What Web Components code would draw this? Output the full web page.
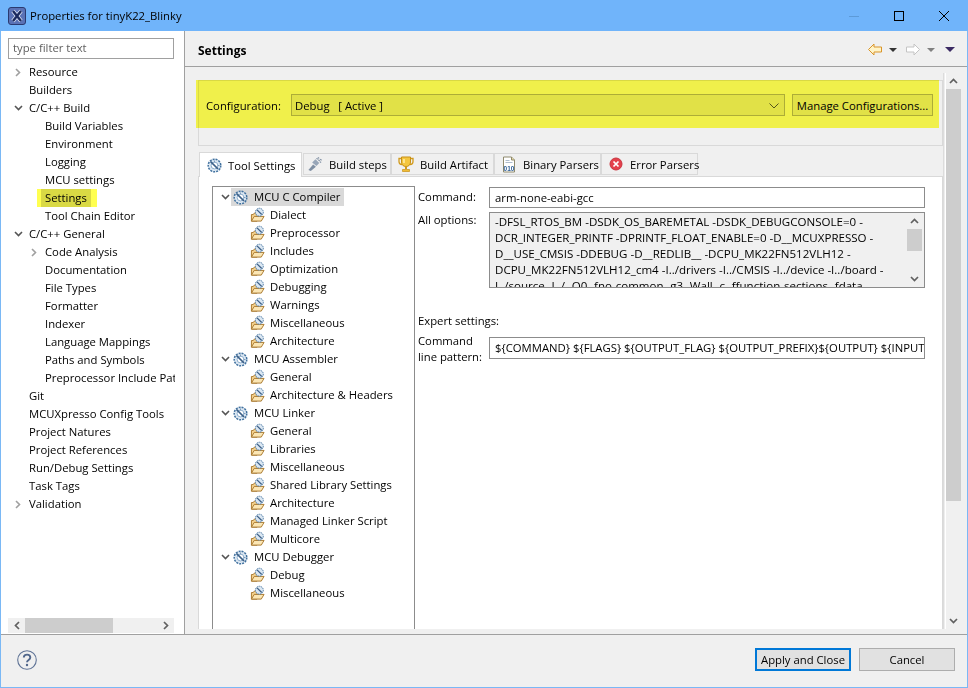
<!DOCTYPE html>
<html>
<head>
<meta charset="utf-8">
<title>Properties for tinyK22_Blinky</title>
<style>
    html, body { margin: 0; padding: 0; }
    body { width: 968px; height: 688px; overflow: hidden; font: 11.3px "Open Sans", "Noto Sans", sans-serif; color: #000; }
</style>
</head>
<body>
<prop-window heading="Properties for tinyK22_Blinky">
    <nav-pane slot="nav">
        <tree-row depth="0" twisty="closed">Resource</tree-row>
        <tree-row depth="0">Builders</tree-row>
        <tree-row depth="0" twisty="open">C/C++ Build</tree-row>
        <tree-row depth="1">Build Variables</tree-row>
        <tree-row depth="1">Environment</tree-row>
        <tree-row depth="1">Logging</tree-row>
        <tree-row depth="1">MCU settings</tree-row>
        <tree-row depth="1" selected marked>Settings</tree-row>
        <tree-row depth="1">Tool Chain Editor</tree-row>
        <tree-row depth="0" twisty="open">C/C++ General</tree-row>
        <tree-row depth="1" twisty="closed">Code Analysis</tree-row>
        <tree-row depth="1">Documentation</tree-row>
        <tree-row depth="1">File Types</tree-row>
        <tree-row depth="1">Formatter</tree-row>
        <tree-row depth="1">Indexer</tree-row>
        <tree-row depth="1">Language Mappings</tree-row>
        <tree-row depth="1">Paths and Symbols</tree-row>
        <tree-row depth="1">Preprocessor Include Paths, Macros etc.</tree-row>
        <tree-row depth="0">Git</tree-row>
        <tree-row depth="0">MCUXpresso Config Tools</tree-row>
        <tree-row depth="0">Project Natures</tree-row>
        <tree-row depth="0">Project References</tree-row>
        <tree-row depth="0">Run/Debug Settings</tree-row>
        <tree-row depth="0">Task Tags</tree-row>
        <tree-row depth="0" twisty="closed">Validation</tree-row>
    </nav-pane>
    <settings-page slot="page" heading="Settings">
        <config-group slot="config"></config-group>
        <tab-folder slot="tabs">
            <folder-tab slot="tabs" icon="tool" active style="width:103px">Tool Settings</folder-tab>
            <folder-tab slot="tabs" icon="steps" style="width:88px;margin-left:1px;padding-left:3px">Build steps</folder-tab>
            <folder-tab slot="tabs" icon="trophy" style="width:103px">Build Artifact</folder-tab>
            <folder-tab slot="tabs" icon="binary" style="width:107px">Binary Parsers</folder-tab>
            <folder-tab slot="tabs" icon="error" style="width:97px">Error Parsers</folder-tab>
            <tool-tree>
                <tree-row inner depth="0" twisty="open" icon="tool" selected>MCU C Compiler</tree-row>
                <tree-row inner depth="1" icon="folder">Dialect</tree-row>
                <tree-row inner depth="1" icon="folder">Preprocessor</tree-row>
                <tree-row inner depth="1" icon="folder">Includes</tree-row>
                <tree-row inner depth="1" icon="folder">Optimization</tree-row>
                <tree-row inner depth="1" icon="folder">Debugging</tree-row>
                <tree-row inner depth="1" icon="folder">Warnings</tree-row>
                <tree-row inner depth="1" icon="folder">Miscellaneous</tree-row>
                <tree-row inner depth="1" icon="folder">Architecture</tree-row>
                <tree-row inner depth="0" twisty="open" icon="tool">MCU Assembler</tree-row>
                <tree-row inner depth="1" icon="folder">General</tree-row>
                <tree-row inner depth="1" icon="folder">Architecture &amp; Headers</tree-row>
                <tree-row inner depth="0" twisty="open" icon="tool">MCU Linker</tree-row>
                <tree-row inner depth="1" icon="folder">General</tree-row>
                <tree-row inner depth="1" icon="folder">Libraries</tree-row>
                <tree-row inner depth="1" icon="folder">Miscellaneous</tree-row>
                <tree-row inner depth="1" icon="folder">Shared Library Settings</tree-row>
                <tree-row inner depth="1" icon="folder">Architecture</tree-row>
                <tree-row inner depth="1" icon="folder">Managed Linker Script</tree-row>
                <tree-row inner depth="1" icon="folder">Multicore</tree-row>
                <tree-row inner depth="0" twisty="open" icon="tool">MCU Debugger</tree-row>
                <tree-row inner depth="1" icon="folder">Debug</tree-row>
                <tree-row inner depth="1" icon="folder">Miscellaneous</tree-row>
            </tool-tree>
            <tool-form></tool-form>
        </tab-folder>
    </settings-page>
</prop-window>

<script>
const ICONS = {
    logo: `<svg width="18" height="18" viewBox="0 0 18 18"><rect x=".5" y=".5" width="17" height="17" rx="2.5" fill="#5a72b6" stroke="#2a3a70"/><path d="M5 4l8 10M13 4L5 14" stroke="#dfe6f6" stroke-width="4"/><path d="M5 4l8 10M13 4L5 14" stroke="#1b2a5e" stroke-width="2.500"/></svg>`,
    tool: `<svg width="15" height="15" viewBox="0 0 15 15"><circle cx="7.500" cy="7.500" r="6.300" fill="#dbe7f2"/><circle cx="7.500" cy="7.500" r="6.300" fill="none" stroke="#41719f" stroke-width="1.500" stroke-dasharray="2 1"/><circle cx="7.500" cy="7.500" r="3.400" fill="#fff" stroke="#8fb0cf"/><path d="M3.500 3.500l7.500 7.500" stroke="#3a5e85" stroke-width="1.700"/><path d="M7.500 2.500v2M12.500 7.500h-2" stroke="#7e9cba"/></svg>`,
    folder: `<svg width="16" height="16" viewBox="0 0 16 16"><path d="M1.500 14.500V7.500h2l1-1.500h3v8.500z" fill="#f4d28e" stroke="#a8752a"/><path d="M1.500 14.500l3-5h10.500l-3 5z" fill="#fbe6b4" stroke="#a8752a"/><circle cx="10" cy="5" r="4.200" fill="#dbe7f2"/><circle cx="10" cy="5" r="4.200" fill="none" stroke="#41719f" stroke-dasharray="1.500 .8"/><path d="M7.500 2.500l5 5" stroke="#3a5e85" stroke-width="1.300"/></svg>`,
    steps: `<svg width="17" height="16" viewBox="0 0 17 16"><path d="M1.500 14.500l5-6 3 2.500-5.500 4.500z" fill="#7f8fa3"/><path d="M5.500 6.500L9 3l4 4-3 3z" fill="#98a6b8"/><path d="M10 2l1.500 1M12 3.500l1.500 1M13.500 5.500l1.500 1M11.500 1l1.500 1M14 3l1.500 1" stroke="#7f8fa3" stroke-width="1.200"/></svg>`,
    trophy: `<svg width="16" height="17" viewBox="0 0 16 17"><path d="M3 2.500H1v3c0 2 1.500 3 3 3M13 2.500h2v3c0 2-1.500 3-3 3" fill="none" stroke="#d19a1c" stroke-width="1.300"/><path d="M3.500 1h9v5c0 3-2 4.500-4.500 4.500S3.500 9 3.500 6z" fill="#f4c63f" stroke="#c78f16"/><path d="M6 3v4" stroke="#fff1b5" stroke-width="1.400"/><path d="M7 10.500h2v2.500H7z" fill="#d19a1c"/><path d="M4.500 13.500h7v2h-7z" fill="#f0bd37" stroke="#c78f16" stroke-width=".7"/></svg>`,
    binary: `<svg width="14" height="17" viewBox="0 0 14 17"><path d="M1.500 1h8l3 3v12h-11z" fill="#fff" stroke="#8f8a6e"/><path d="M9.500 1v3h3" fill="#e8d9a4" stroke="#8f8a6e"/><path d="M3.500 4.500h4M3.500 6.500h7" stroke="#aebccc"/><text x="7" y="14.500" text-anchor="middle" font-family="Liberation Sans" font-size="6.500" font-weight="700" fill="#2f5f96">010</text></svg>`,
    error: `<svg width="14" height="14" viewBox="0 0 14 14"><circle cx="7" cy="7" r="6" fill="#e4404c" stroke="#c9353f"/><path d="M4.500 4.500l5 5M9.500 4.500l-5 5" stroke="#fff" stroke-width="1.700"/></svg>`,
    back: `<svg width="16" height="13" viewBox="0 0 16 13"><path d="M1.500 6.500L7 1v3h7.500v5H7v3z" fill="#fff4c8" stroke="#d9952b" stroke-linejoin="round"/></svg>`,
    forward: `<svg width="16" height="13" viewBox="0 0 16 13"><path d="M14.500 6.500L9 1v3H1.500v5H9v3z" fill="#fff" stroke="#c4c4c4" stroke-linejoin="round"/></svg>`,
    chevOpen: `<svg width="9" height="6" viewBox="0 0 9 6"><path d="M1 1l3.500 3.500L8 1" fill="none" stroke="#555" stroke-width="1.600"/></svg>`,
    chevClosed: `<svg width="6" height="9" viewBox="0 0 6 9"><path d="M1 1l3.500 3.500L1 8" fill="none" stroke="#a0a0a0" stroke-width="1.600"/></svg>`,
    chevUp: `<svg width="9" height="6" viewBox="0 0 9 6"><path d="M1 5l3.500-3.500L8 5" fill="none" stroke="#606060" stroke-width="1.700"/></svg>`,
    chevLeft: `<svg width="6" height="9" viewBox="0 0 6 9"><path d="M5 1L1.500 4.500 5 8" fill="none" stroke="#606060" stroke-width="1.700"/></svg>`,
    chevRight: `<svg width="6" height="9" viewBox="0 0 6 9"><path d="M1 1l3.500 3.500L1 8" fill="none" stroke="#606060" stroke-width="1.700"/></svg>`,
    chevDown: `<svg width="9" height="6" viewBox="0 0 9 6"><path d="M1 1l3.500 3.500L8 1" fill="none" stroke="#606060" stroke-width="1.700"/></svg>`,
    comboArrow: `<svg width="10" height="6" viewBox="0 0 10 6"><path d="M.5.500L5 5 9.500.500" fill="none" stroke="#555" stroke-width="1"/></svg>`,
    minimize: `<svg width="10" height="10" viewBox="0 0 10 10"><path d="M0 5.500h10" stroke="#5c9ad8"/></svg>`,
    maximize: `<svg width="10" height="10" viewBox="0 0 10 10"><rect x=".5" y=".5" width="9" height="9" fill="none" stroke="#000"/></svg>`,
    close: `<svg width="10" height="10" viewBox="0 0 10 10"><path d="M0 0l10 10M10 0L0 10" stroke="#000"/></svg>`,
    help: `<svg width="20" height="20" viewBox="0 0 20 20"><circle cx="10" cy="10" r="9.300" fill="none" stroke="#5f7396" stroke-width="1.100"/><path d="M6.800 7.600c0-4 6.500-4 6.500 0 0 2.500-3.300 2.300-3.300 4.600" fill="none" stroke="#51678c" stroke-width="1.900"/><circle cx="10" cy="15" r="1.200" fill="#51678c"/></svg>`,
};

function defineShadow(name, html, extra = {}) {
    const template = document.createElement('template');
    template.innerHTML = html;
    const cls = class extends HTMLElement {
        constructor() {
            super();
            this.attachShadow({ mode: 'open' });
            this.shadowRoot.appendChild(template.content.cloneNode(true));
        }
        connectedCallback() {
            this.shadowRoot.querySelectorAll('[data-icon]').forEach(el => {
                el.innerHTML = ICONS[el.dataset.icon] || '';
            });
            if (extra.connected) extra.connected.call(this);
        }
    };
    customElements.define(name, cls);
}

defineShadow('win-titlebar', `
<style>
    :host { display: flex; align-items: center; height: 31px; background: #70b4fa; flex: none; padding-right: 2px; }
    .logo { margin-left: 8px; width: 18px; height: 18px; display: flex; }
    .text { margin-left: 4px; flex: 1; color: #000; }
    .btn { width: 45px; display: flex; justify-content: center; align-items: center; }
</style>
<span class="logo" data-icon="logo"></span>
<span class="text"><slot></slot></span>
<span class="btn" data-icon="minimize"></span>
<span class="btn" data-icon="maximize"></span>
<span class="btn" data-icon="close"></span>
`);

defineShadow('prop-window', `
<style>
    :host { display: flex; flex-direction: column; width: 968px; height: 688px; box-sizing: border-box; background: #fff;
        border: solid #7ab8f5; border-width: 0 1px 1px 1px; }
    win-titlebar { margin: 0 -1px; }
    .main { display: flex; height: 603px; flex: none; }
    .sash { width: 1px; background: #a0a0a0; flex: none; }
    footer { flex: 1; display: flex; align-items: center; background: #f0f0f0; border-top: 1px solid #a0a0a0; padding: 0 12px 3px 16px; }
    .help { display: flex; flex: 1; }
    .b { box-sizing: border-box; width: 96px; height: 23px; margin-left: 8px; background: #e1e1e1; border: 1px solid #adadad;
        display: flex; align-items: center; justify-content: center; }
    .b.def { border: 2px solid #0078d7; }
</style>
<win-titlebar id="bar"></win-titlebar>
<div class="main">
    <slot name="nav"></slot>
    <div class="sash"></div>
    <slot name="page"></slot>
</div>
<footer>
    <span class="help" data-icon="help"></span>
    <span class="b def">Apply and Close</span>
    <span class="b">Cancel</span>
</footer>
`, { connected() { this.shadowRoot.getElementById('bar').textContent = this.getAttribute('heading'); } });

defineShadow('scroll-bar', `
<style>
    :host { display: flex; flex-direction: column; align-items: stretch; width: 15px; background: #f0f0f0; flex: none; }
    .arrow { height: 16px; display: flex; align-items: center; justify-content: center; flex: none; }
    .track { flex: 1; }
    .thumb { background: #cdcdcd; height: var(--thumb, 50%); }
</style>
<span class="arrow" data-icon="chevUp"></span>
<div class="track"><div class="thumb"></div></div>
<span class="arrow" data-icon="chevDown"></span>
`);

defineShadow('nav-pane', `
<style>
    :host { display: flex; flex-direction: column; width: 183px; flex: none; background: #fff; padding-top: 7px; box-sizing: border-box; height: 603px; }
    .filter { box-sizing: border-box; margin-left: 7px; width: 166px; height: 21px; border: 1px solid #a0a0a0; padding-left: 4px;
        line-height: 18px; color: #5f5f5f; flex: none; }
    .rows { margin-top: 4px; padding-left: 9px; height: 450px; flex: none; width: 174px; box-sizing: border-box; overflow: hidden; }
    .spacer { flex: 1; }
    .hbar { margin-left: 7px; width: 166px; height: 15px; background: #f0f0f0; display: flex; align-items: center; flex: none; margin-bottom: 1px; }
    .hbar span { width: 17px; display: flex; justify-content: center; flex: none; }
    .hbar i { display: block; width: 88px; height: 15px; background: #cdcdcd; flex: none; }
    .hbar b { flex: 1; }
</style>
<div class="filter">type filter text</div>
<div class="rows"><slot></slot></div>
<div class="spacer"></div>
<div class="hbar"><span data-icon="chevLeft"></span><i></i><b></b><span data-icon="chevRight"></span></div>
`);

defineShadow('tree-row', `
<style>
    :host { display: flex; height: 18px; line-height: 18px; white-space: nowrap; position: relative; align-items: center; }
    .indent { flex: none; width: var(--indent, 0); }
    :host([depth="1"]) { --indent: 16px; }
    :host([inner][depth="1"]) { --indent: 17px; }
    .twisty { flex: none; width: 16px; display: flex; align-items: center; justify-content: center; }
    .sel { display: flex; align-items: center; height: 18px; padding: 0 3px; margin-left: 0; }
    :host([inner]) .sel { margin-left: -2px; padding: 0 4px 0 2px; }
    :host([selected]) .sel { background: #d9d9d9; }
    .ico { display: none; flex: none; width: 15px; height: 16px; align-items: center; justify-content: center; margin-right: 5px; }
    :host([icon]) .ico { display: flex; }
    :host([depth="0"]) .ico { margin-right: 6px; }
    :host([marked])::after { content: ""; position: absolute; left: 27px; top: 0; width: 60px; height: 18px; background: #ffff50;
        mix-blend-mode: multiply; pointer-events: none; }
    :host([marked]) .sel { padding: 0 4px; margin-left: -1px; position: relative; }
</style>
<span class="indent"></span>
<span class="twisty" id="tw"></span>
<span class="sel"><span class="ico" id="ic"></span><span><slot></slot></span></span>
`, { connected() {
    const t = this.getAttribute('twisty');
    if (t) this.shadowRoot.getElementById('tw').innerHTML = t === 'open' ? ICONS.chevOpen : ICONS.chevClosed;
    const i = this.getAttribute('icon');
    if (i) this.shadowRoot.getElementById('ic').innerHTML = ICONS[i];
} });

defineShadow('settings-page', `
<style>
    :host { display: flex; flex-direction: column; flex: 1; min-width: 0; background: #f0f0f0; }
    header { height: 35px; flex: none; box-sizing: border-box; display: flex; align-items: center; padding: 3px 12px 0 13px; }
    .rule { height: 1px; background: #a0a0a0; flex: none; }
    h1 { margin: 0; font: inherit; font-size: 12px; font-weight: 700; flex: 1; }
    .tool { display: flex; align-items: center; margin-top: -2px; }
    .tri { width: 0; height: 0; border: solid transparent; border-width: 4px 4px 0; border-top-color: #333; margin: 1px 8px 0 6px; }
    .tri.off { border-top-color: #808080; margin-right: 10px; }
    .tri.menu { border-width: 5px 5px 0; border-top-color: #3b2a63; margin: 1px 0 0 0; }
    .body { flex: 1; display: flex; min-height: 0; }
    .content { width: 758px; flex: none; padding: 13px 0 0 13px; box-sizing: border-box; }
    .content ::slotted(config-group) { margin-bottom: 6px; }
    .edge { width: 3px; flex: none; margin: 6px 0 5px; background: linear-gradient(to right, #dcdcdc 0 1px, #eee 1px 2px, #fff 2px 3px); }
    scroll-bar { margin-top: 6px; margin-bottom: 5px; --thumb: 412px; }
</style>
<header>
    <h1 id="h"></h1>
    <div class="tool">
        <span data-icon="back" style="display:flex"></span><i class="tri"></i>
        <span data-icon="forward" style="display:flex"></span><i class="tri off"></i><i class="tri menu"></i>
    </div>
</header>
<div class="rule"></div>
<div class="body">
    <div class="content">
        <slot name="config"></slot>
        <slot name="tabs"></slot>
    </div>
    <div class="edge"></div>
    <scroll-bar></scroll-bar>
</div>
`, { connected() { this.shadowRoot.getElementById('h').textContent = this.getAttribute('heading'); } });

defineShadow('config-group', `
<style>
    :host { display: block; position: relative; box-sizing: border-box; width: 745px; height: 66px; border: 1px solid #d9d9d9; padding: 13px 9px 0 7px; }
    .row { display: flex; align-items: center; height: 22px; }
    label { width: 85px; flex: none; }
    .combo { box-sizing: border-box; width: 494px; height: 22px; background: #e1e1e1; border: 1px solid #adadad; display: flex; align-items: center; padding: 0 4px 0 3px; }
    .combo span:first-child { flex: 1; }
    .combo span:last-child { display: flex; margin-top: 1px; margin-right: 1px; }
    .btn { box-sizing: border-box; width: 141px; height: 22px; margin-left: 7px; background: #e1e1e1; border: 1px solid #adadad; display: flex; align-items: center; justify-content: center; white-space: nowrap; }
    .mark { position: absolute; left: -3px; top: -1px; width: 743px; height: 48px; background: #ffff50; mix-blend-mode: multiply; pointer-events: none; }
</style>
<div class="row">
    <label>Configuration:</label>
    <div class="combo"><span>Debug &nbsp;&nbsp;[ Active ]</span><span data-icon="comboArrow"></span></div>
    <div class="btn">Manage Configurations...</div>
</div>
<div class="mark"></div>
`);

defineShadow('folder-tab', `
<style>
    :host { display: flex; box-sizing: border-box; height: 22px; align-items: center; gap: 6px; padding-left: 6px; background: #f0f0f0;
        border: 1px solid #d9d9d9; margin-bottom: 1px; white-space: nowrap; flex: none; }
    :host([active]) { height: 25px; background: #fff; position: relative; padding-left: 7px; z-index: 1; margin-bottom: -1px; border-bottom: none; }
    :host([active]) .i { width: 15px; }
    .i { display: flex; width: 16px; justify-content: center; flex: none; }
</style>
<span class="i" id="i"></span><span><slot></slot></span>
`, { connected() { this.shadowRoot.getElementById('i').innerHTML = ICONS[this.getAttribute('icon')]; } });

defineShadow('tab-folder', `
<style>
    :host { display: block; width: 745px; }
    .tabs { display: flex; align-items: flex-end; height: 24px; padding-left: 1px; }
    .panel { box-sizing: border-box; height: 453px; background: #fff; border: 1px solid #d9d9d9; border-bottom: none; display: flex; padding: 9px 0 0 13px; overflow: hidden; gap: 3px; }
</style>
<div class="tabs"><slot name="tabs"></slot></div>
<div class="panel"><slot></slot></div>
`);

defineShadow('tool-tree', `
<style>
    :host { display: block; box-sizing: border-box; width: 203px; flex: none; height: 470px; border: 1px solid #8c8c8c; padding: 1px 0 0 4px; }
</style>
<slot></slot>
`);

defineShadow('tool-form', `
<style>
    :host { display: block; width: 507px; flex: none; }
    .row { display: flex; }
    .lab { width: 71px; flex: none; line-height: 16px; }
    .field { box-sizing: border-box; width: 436px; border: 1px solid #8c8c8c; background: #fff; padding-left: 5px; white-space: nowrap; overflow: hidden; }
    .cmd { height: 21px; line-height: 19px; margin-top: 1px; }
    .opts { height: 76px; margin-top: 4px; background: #f0f0f0; display: flex; padding-left: 0; line-height: 16px; font-size: 11.55px; }
    .lines { flex: 1; padding: 1px 0 0 5px; overflow: hidden; }
    .pat { height: 22px; line-height: 20px; }
    scroll-bar { width: 15px; margin-right: 2px; --thumb: 22px; height: 74px; }
    .expert { margin: 25px 0 8px; line-height: 16px; }
    .top { padding-top: 3px; }
    .pl { margin-top: -4px; }
</style>
<div class="row"><div class="lab top">Command:</div><div class="field cmd">arm-none-eabi-gcc</div></div>
<div class="row"><div class="lab" style="margin-top:4px">All options:</div><div class="field opts"><div class="lines">
    <div>-DFSL_RTOS_BM -DSDK_OS_BAREMETAL -DSDK_DEBUGCONSOLE=0 -</div>
    <div>DCR_INTEGER_PRINTF -DPRINTF_FLOAT_ENABLE=0 -D__MCUXPRESSO -</div>
    <div>D__USE_CMSIS -DDEBUG -D__REDLIB__ -DCPU_MK22FN512VLH12 -</div>
    <div>DCPU_MK22FN512VLH12_cm4 -I../drivers -I../CMSIS -I../device -I../board -</div>
    <div>I../source -I../ -O0 -fno-common -g3 -Wall -c -ffunction-sections -fdata-</div>
</div><scroll-bar></scroll-bar></div></div>
<div class="expert">Expert settings:</div>
<div class="row"><div class="lab pl">Command<br>line pattern:</div><div class="field pat">\${COMMAND} \${FLAGS} \${OUTPUT_FLAG} \${OUTPUT_PREFIX}\${OUTPUT} \${INPUTS}</div></div>
`);
</script>
</body>
</html>
